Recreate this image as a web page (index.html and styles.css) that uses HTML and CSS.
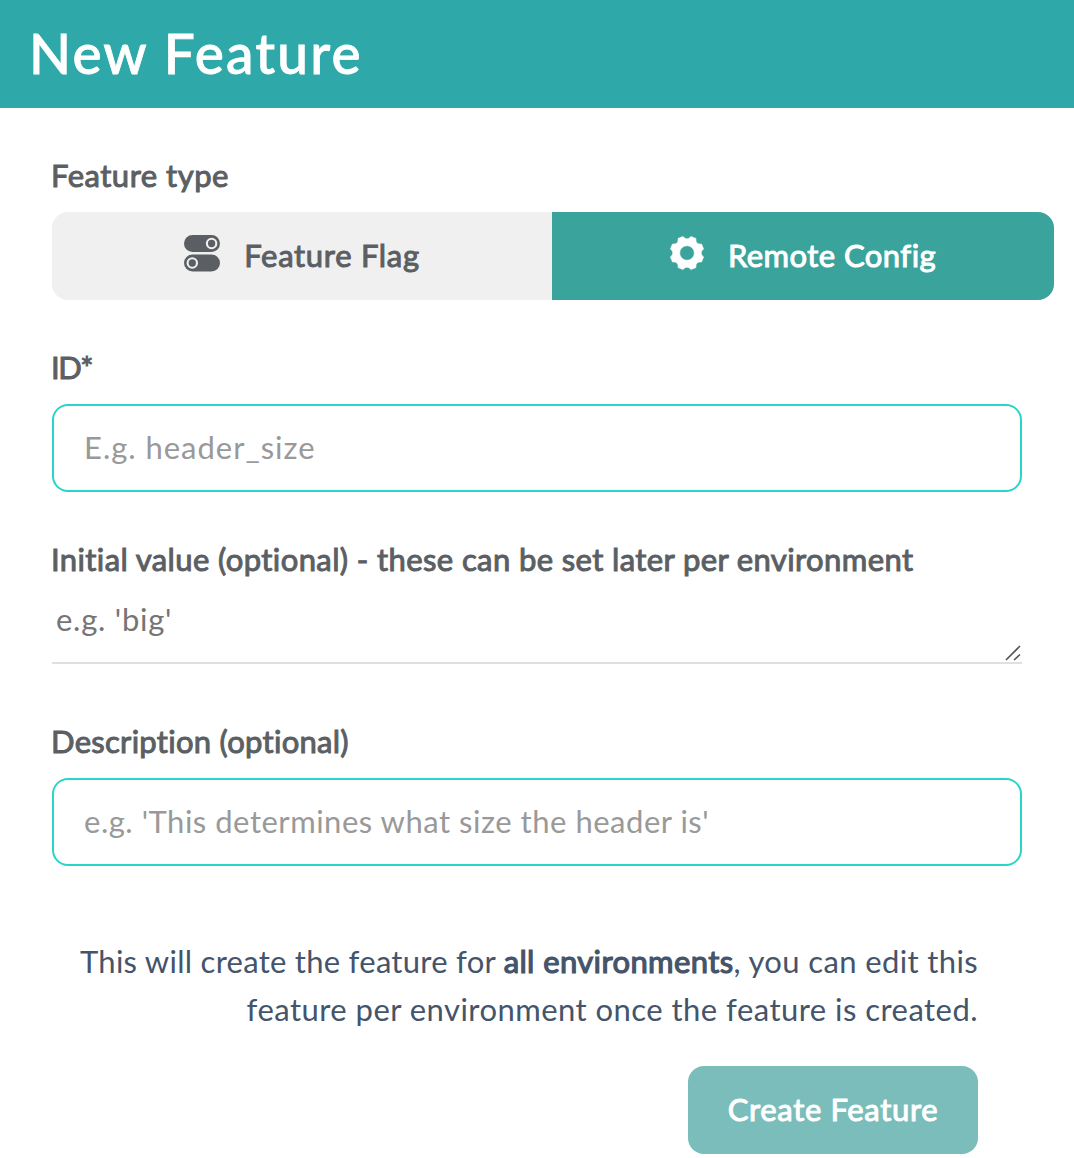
FILE: index.html
```html
<!DOCTYPE html>
<html lang="en">
<head>
<meta charset="utf-8">
<title>New Feature</title>
<link rel="stylesheet" href="styles.css">
</head>
<body>
<header class="header"><h1 class="title">New Feature</h1></header>
<main class="form">
  <div class="label label-type">Feature type</div>
  <div class="tabs">
    <button class="tab" type="button">
      <svg class="icon-toggle" viewBox="0 0 36 37" width="36" height="37">
        <rect width="36" height="17" rx="8.5" fill="#5b5f64"/>
        <rect y="19.5" width="36" height="17" rx="8.5" fill="#5b5f64"/>
        <circle cx="27.6" cy="8.5" r="4.7" fill="none" stroke="#f0f0f0" stroke-width="2.1"/>
        <circle cx="8.3" cy="28" r="4.7" fill="none" stroke="#f0f0f0" stroke-width="2.1"/>
      </svg>
      <span class="tab-flag">Feature Flag</span>
    </button>
    <button class="tab tab-active" type="button">
      <svg class="icon-gear" viewBox="-18 -18 36 36" width="36" height="36">
        <path fill="#fff" stroke="#fff" stroke-width=".6" stroke-linejoin="round" fill-rule="evenodd" d="M3.9-16.6L9-14.5C8.3-10.6 10.6-8.3 14.5-9L16.6-3.9C13.4-1.65 13.4 1.65 16.6 3.9L14.5 9C10.6 8.3 8.3 10.6 9 14.5L3.9 16.6C1.65 13.4-1.65 13.4-3.9 16.6L-9 14.5C-8.3 10.6-10.6 8.3-14.5 9L-16.6 3.9C-13.4 1.65-13.4-1.65-16.6-3.9L-14.5-9C-10.6-8.3-8.3-10.6-9-14.5L-3.9-16.6C-1.65-13.4 1.65-13.4 3.9-16.6ZM0-7.3A7.3 7.3 0 1 0 0 7.3A7.3 7.3 0 1 0 0-7.3Z"/>
      </svg>
      <span class="tab-config">Remote Config</span>
    </button>
  </div>
  <label class="label label-id" for="id">ID*</label>
  <input class="input input-id" id="id" placeholder="E.g. header_size">
  <label class="label label-value" for="value">Initial value (optional) - these can be set later per environment</label>
  <div class="value-row">
    <textarea class="textarea" id="value" rows="1" placeholder="e.g. 'big'"></textarea>
    <svg class="grip" viewBox="0 0 16 16" width="16" height="16"><path d="M1 15L15 1M9 15L15 9.5" stroke="#555" stroke-width="1.6"/></svg>
  </div>
  <label class="label label-desc" for="desc">Description (optional)</label>
  <input class="input input-desc" id="desc" placeholder="e.g. 'This determines what size the header is'">
  <div class="footer">
    <p class="note"><span class="note-a">This will create the feature for </span><strong class="strong">all environments</strong><span class="note-b">, you can edit this</span><br><span class="note-c">feature per environment once the feature is created.</span></p>
    <button class="create" type="button">Create Feature</button>
  </div>
</main>
</body>
</html>
```
FILE: styles.css
```css
* { box-sizing: border-box; }
body { margin: 0; background: #fff; font-family: Lato, "Liberation Sans", sans-serif; font-size: 31px; font-variant-ligatures: none; overflow: hidden; }
.header { height: 108px; background: #2ea8a8; padding-left: 29px; }
.title { margin: 0; font-size: 55px; line-height: 106px; font-weight: 500; color: #fff; letter-spacing: 2.15px; -webkit-text-stroke: .8px #fff; }
.form { display: flex; flex-direction: column; padding: 48px 52px 0; }
.label { height: 40px; line-height: 38px; margin-left: -1px; color: #5b5f64; -webkit-text-stroke: 1px #5b5f64; white-space: nowrap; }
.label-type { letter-spacing: .5px; }
.tabs { display: flex; width: 1002px; height: 88px; margin-top: 16px; border-radius: 16px; overflow: hidden; }
.tab { width: 500px; border: 0; padding: 0 0 2px; background: #f0f0f0; color: #5b5f64; font: inherit; display: flex; align-items: center; justify-content: center; gap: 24px; -webkit-text-stroke: 1px #5b5f64; }
.tab-active { width: 502px; gap: 23px; padding-right: 1px; background: #3aa39b; color: #fff; -webkit-text-stroke-color: #fff; }
.tab svg { margin-bottom: 4px; }
.tab-flag { letter-spacing: .7px; }
.tab-config { letter-spacing: .45px; }
.label-id { margin-top: 48px; letter-spacing: -1.5px; }
.input { width: 970px; height: 88px; margin-top: 16px; border: 2px solid #2bd4c8; border-radius: 16px; padding: 0 30px 2px; font: inherit; background: #fff; outline: 0; }
.input::placeholder { color: #999; opacity: 1; }
.input-id { letter-spacing: .98px; }
.input-desc { letter-spacing: .52px; }
.label-value { margin-top: 48px; letter-spacing: .39px; }
.value-row { position: relative; height: 84px; border-bottom: 2px solid #e0e0e0; }
.textarea { display: block; width: 100%; height: 82px; border: 0; outline: 0; padding: 19px 4px 0; font: inherit; line-height: 40px; letter-spacing: .75px; resize: none; overflow: hidden; background: transparent; }
.textarea::placeholder { color: #757575; opacity: 1; }
.grip { position: absolute; right: 1px; bottom: 1px; }
.label-desc { margin-top: 58px; letter-spacing: .28px; }
.footer { display: flex; flex-direction: column; align-items: flex-end; padding-right: 44px; margin-top: 71px; }
.note { margin: 0; line-height: 48px; text-align: right; color: #44546a; white-space: nowrap; }
.note-a { letter-spacing: .27px; }
.note-b { letter-spacing: .37px; }
.note-c { letter-spacing: .46px; }
.strong { font-weight: 400; letter-spacing: .38px; -webkit-text-stroke: 1.2px #44546a; }
.create { width: 290px; height: 88px; margin-top: 33px; padding: 0 0 2px; border: 0; border-radius: 16px; background: #7abdba; color: #fff; font: inherit; letter-spacing: .65px; -webkit-text-stroke: 1px #fff; }
```
